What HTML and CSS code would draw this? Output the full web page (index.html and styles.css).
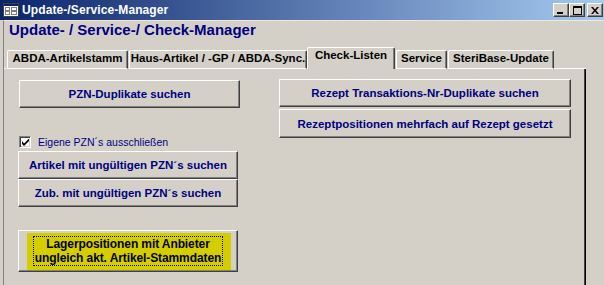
FILE: index.html
```html
<!DOCTYPE html>
<html lang="de">
<head>
    <meta charset="UTF-8">
    <title>Update-/Service-Manager</title>
    <link rel="stylesheet" href="styles.css">
</head>
<body>
    <div class="window">
        <!-- Title bar -->
        <div class="titlebar">
            <svg class="app-icon" width="16" height="14" viewBox="0 0 16 14">
                <rect x="0.5" y="0.5" width="15" height="13" fill="#fff" stroke="#404040"/>
                <rect x="1" y="1" width="14" height="2" fill="#0a246a"/>
                <rect x="2.5" y="4.5" width="4" height="3" fill="none" stroke="#808080"/>
                <rect x="8.5" y="4.5" width="5" height="3" fill="none" stroke="#808080"/>
                <rect x="2.5" y="8.5" width="4" height="3" fill="none" stroke="#808080"/>
                <rect x="8.5" y="8.5" width="5" height="3" fill="none" stroke="#808080"/>
            </svg>
            <span class="title">Update-/Service-Manager</span>
            <div class="caption-buttons">
                <span class="cap-btn">
                    <svg width="8" height="7" viewBox="0 0 8 7"><rect x="0" y="5" width="6" height="2" fill="#000"/></svg>
                </span>
                <span class="cap-btn">
                    <svg width="9" height="9" viewBox="0 0 9 9"><rect x="0.5" y="0.5" width="8" height="8" fill="none" stroke="#000"/><rect x="0" y="0" width="9" height="2" fill="#000"/></svg>
                </span>
                <span class="cap-btn close">
                    <svg width="8" height="7" viewBox="0 0 8 7"><path d="M0 0h2l2 2.5 2-2.5h2l-3 3.5 3 3.5h-2l-2-2.5-2 2.5h-2l3-3.5z" fill="#000"/></svg>
                </span>
            </div>
        </div>

        <div class="client">
            <h1>Update- / Service-/ Check-Manager</h1>

            <!-- Tabs -->
            <div class="tabs">
                <div class="tab tab-abda">ABDA-Artikelstamm</div>
                <div class="tab tab-haus">Haus-Artikel / -GP / ABDA-Sync.</div>
                <div class="tab tab-check active">Check-Listen</div>
                <div class="tab tab-service">Service</div>
                <div class="tab tab-steri">SteriBase-Update</div>
            </div>

            <!-- Check-Listen page -->
            <div class="panel">
                <div class="col col-left">
                    <button class="btn btn-pzn">PZN-Duplikate suchen</button>
                    <label class="check">
                        <span class="check-box">
                            <svg width="7" height="7" viewBox="0 0 7 7"><path d="M0 2v3l2 2 5-5v-2.5l-5 5z" fill="#000"/></svg>
                        </span>
                        Eigene PZN´s ausschließen
                    </label>
                    <div class="stack">
                        <button class="btn">Artikel mit ungültigen PZN´s suchen</button>
                        <button class="btn">Zub. mit ungültigen PZN´s suchen</button>
                    </div>
                    <button class="btn btn-lager">
                        <span class="lager-face">
                            <span class="focus">Lagerpositionen mit Anbieter<br>ungleich akt. Artikel-Stammdaten</span>
                        </span>
                    </button>
                </div>
                <div class="col col-right">
                    <button class="btn btn-wide">Rezept Transaktions-Nr-Duplikate suchen</button>
                    <button class="btn btn-wide btn-tall">Rezeptpositionen mehrfach auf Rezept gesetzt</button>
                </div>
            </div>
        </div>
    </div>
</body>
</html>
```

FILE: styles.css
```css
body {
    margin: 0;
    font-family: "Liberation Sans", Arial, sans-serif;
    background-color: #d4d0c8;
}
.window {
    width: 604px;
    height: 285px;
    overflow: hidden;
    background-color: #d4d0c8;
}
.titlebar {
    height: 20px;
    display: flex;
    align-items: center;
    background: linear-gradient(to right, #0a246a, #a6caf0);
}
.app-icon {
    margin-left: 3px;
    flex-shrink: 0;
}
.title {
    margin-left: 3px;
    color: #fff;
    font-weight: bold;
    font-size: 12px;
    letter-spacing: 0.1px;
}
.caption-buttons {
    margin-left: auto;
    display: flex;
    align-items: center;
    padding-right: 1px;
}
.cap-btn {
    width: 14px;
    height: 12px;
    display: flex;
    align-items: center;
    justify-content: center;
    background: #d4d0c8;
    border: 1px solid;
    border-color: #fff #404040 #404040 #fff;
    box-shadow: inset -1px -1px #808080;
}
.cap-btn.close {
    margin-left: 2px;
}
.client {
    height: 265px;
    margin-left: 3px;
    border-left: 1px solid #808080;
    border-top: 1px solid #ece9e1;
}
h1 {
    margin: 0;
    padding-left: 5px;
    font-size: 15px;
    line-height: 18px;
    color: #000080;
}
.tabs {
    margin-top: 7px;
    width: 582px;
    height: 23px;
    display: flex;
    align-items: flex-end;
    gap: 1px;
}
.tabs::before {
    content: "";
    width: 2px;
    border-bottom: 1px solid #fff;
}
.tabs::after {
    content: "";
    flex: 1;
    margin-left: -1px;
    border-bottom: 1px solid #fff;
}
.tab {
    box-sizing: border-box;
    height: 19px;
    padding-bottom: 2px;
    text-align: center;
    font-size: 11.5px;
    font-weight: bold;
    line-height: 15px;
    white-space: nowrap;
    border: 1px solid;
    border-color: #fff #404040 #fff #fff;
    border-radius: 2px 2px 0 0;
    box-shadow: inset -1px 0 #808080;
}
.tab-abda { width: 121px; }
.tab-haus { width: 178px; }
.tab-check { width: 88px; }
.tab-service { width: 51px; }
.tab-steri { width: 106px; }
.tab.active {
    height: 22px;
    padding-bottom: 6px;
    border-bottom: none;
    margin-left: -1px;
}
.panel {
    box-sizing: border-box;
    width: 582px;
    height: 220px;
    display: flex;
    padding: 10px 0 0 14px;
    gap: 39px;
    border-right: 1px solid #000;
    box-shadow: inset -1px 0 #404040;
}
.col {
    display: flex;
    flex-direction: column;
}
.col-left {
    width: 222px;
    padding-top: 1px;
}
.btn {
    box-sizing: border-box;
    width: 220px;
    height: 28px;
    padding: 0;
    background: #d4d0c8;
    border: 1px solid;
    border-color: #fff #404040 #404040 #fff;
    box-shadow: inset -1px -1px #808080;
    font-family: "Liberation Sans", Arial, sans-serif;
    font-size: 11.5px;
    font-weight: bold;
    color: #000080;
    text-align: center;
    white-space: nowrap;
}
.btn-pzn {
    width: 221px;
    margin-left: 1px;
}
.check {
    margin-top: 28px;
    display: flex;
    align-items: center;
    gap: 7px;
    padding-left: 1px;
    height: 12px;
    font-size: 10.5px;
    color: #000080;
}
.check-box {
    box-sizing: border-box;
    width: 12px;
    height: 12px;
    display: flex;
    align-items: center;
    justify-content: center;
    background: #fff;
    border: 1px solid;
    border-color: #808080 #fff #fff #808080;
    box-shadow: inset 1px 1px #404040, inset -1px -1px #d4d0c8;
}
.stack {
    margin-top: 3px;
    display: flex;
    flex-direction: column;
}
.btn-lager {
    margin-top: 23px;
    height: 42px;
    padding: 2px 6px 0 8px;
    display: flex;
    align-items: stretch;
    color: #000;
}
.lager-face {
    flex: 1;
    margin-bottom: 1px;
    background: #d4ce00;
    padding: 3px 8px 4px 6px;
    display: flex;
}
.focus {
    flex: 1;
    border: 1px dotted #000;
    font-size: 12px;
    line-height: 14px;
    letter-spacing: -0.1px;
    display: flex;
    flex-direction: column;
    justify-content: center;
}
.col-right {
    gap: 2px;
}
.btn-wide {
    width: 292px;
}
.btn-tall {
    height: 29px;
}
```
